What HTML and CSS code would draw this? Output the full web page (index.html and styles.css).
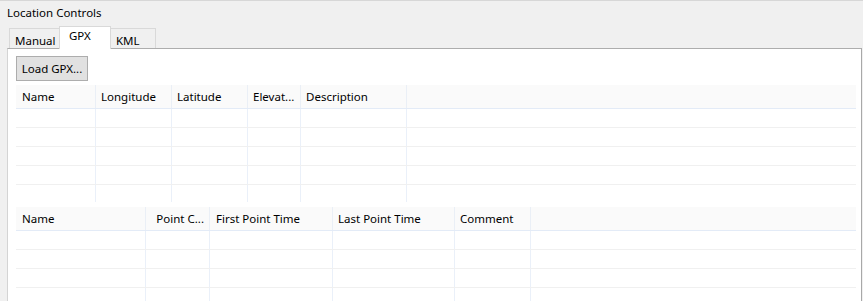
FILE: index.html
```html
<!DOCTYPE html>
<html>
<head>
<meta charset="utf-8">
<link rel="stylesheet" href="styles.css">
</head>
<body>
<div class="window">
  <div class="title">Location Controls</div>
  <div class="tabs">
    <div class="tab tab-manual">Manual</div>
    <div class="tab tab-gpx active">GPX</div>
    <div class="tab tab-kml">KML</div>
  </div>
  <div class="panel">
    <button class="btn">Load GPX...</button>
    <div class="grid grid-points">
      <div class="row head">
        <div class="cell first">Name</div>
        <div class="cell">Longitude</div>
        <div class="cell">Latitude</div>
        <div class="cell">Elevat...</div>
        <div class="cell">Description</div>
        <div class="cell fill"></div>
      </div>
      <div class="row"><div class="cell"></div><div class="cell"></div><div class="cell"></div><div class="cell"></div><div class="cell"></div><div class="cell fill"></div></div>
      <div class="row"><div class="cell"></div><div class="cell"></div><div class="cell"></div><div class="cell"></div><div class="cell"></div><div class="cell fill"></div></div>
      <div class="row"><div class="cell"></div><div class="cell"></div><div class="cell"></div><div class="cell"></div><div class="cell"></div><div class="cell fill"></div></div>
      <div class="row"><div class="cell"></div><div class="cell"></div><div class="cell"></div><div class="cell"></div><div class="cell"></div><div class="cell fill"></div></div>
      <div class="row"><div class="cell"></div><div class="cell"></div><div class="cell"></div><div class="cell"></div><div class="cell"></div><div class="cell fill"></div></div>
    </div>
    <div class="grid grid-tracks">
      <div class="row head">
        <div class="cell first">Name</div>
        <div class="cell right">Point C...</div>
        <div class="cell wide">First Point Time</div>
        <div class="cell">Last Point Time</div>
        <div class="cell">Comment</div>
        <div class="cell fill"></div>
      </div>
      <div class="row"><div class="cell"></div><div class="cell"></div><div class="cell"></div><div class="cell"></div><div class="cell"></div><div class="cell fill"></div></div>
      <div class="row"><div class="cell"></div><div class="cell"></div><div class="cell"></div><div class="cell"></div><div class="cell"></div><div class="cell fill"></div></div>
      <div class="row"><div class="cell"></div><div class="cell"></div><div class="cell"></div><div class="cell"></div><div class="cell"></div><div class="cell fill"></div></div>
      <div class="row"><div class="cell"></div><div class="cell"></div><div class="cell"></div><div class="cell"></div><div class="cell"></div><div class="cell fill"></div></div>
    </div>
  </div>
</div>
</body>
</html>
```
FILE: styles.css
```css
* { box-sizing: border-box; }
html, body {
  margin: 0;
  padding: 0;
  width: 863px;
  height: 301px;
  overflow: hidden;
  background: #f0f0f0;
  font-family: "Noto Sans", "Liberation Sans", Arial, sans-serif;
  font-size: 11.5px;
  color: #000;
}
.window {
  border-top: 1px solid #d7d7d7;
  height: 301px;
}
.title {
  padding: 4px 0 0 7px;
  line-height: 16px;
  height: 21px;
}
.tabs {
  display: flex;
  align-items: flex-end;
  height: 26px;
  padding-left: 9px;
  position: relative;
  z-index: 2;
}
.tab {
  height: 20px;
  border: 1px solid #d9d9d9;
  border-bottom: none;
  background: #f0f0f0;
  line-height: 14px;
  padding-top: 5px;
}
.tab-manual { width: 50px; padding-left: 5px; border-right: none; }
.tab-gpx { width: 52px; padding-left: 9px; }
.tab-kml { width: 45px; padding-left: 5px; border-left: none; }
.tab.active {
  height: 23px;
  margin-bottom: -1px;
  background: #fff;
  border-color: #d9d9d9;
  padding-top: 2px;
}
.panel {
  margin: 0 1px 0 7px;
  background: #fff;
  border: 1px solid #adadad;
  border-left-color: #d4d4d4;
  border-right-color: #a8a8a8;
  border-bottom: none;
  height: 253px;
  padding: 7px 5px 0 8px;
  overflow: hidden;
}
.btn {
  display: block;
  width: 72px;
  height: 25px;
  margin: 0;
  padding: 0;
  background: #e1e1e1;
  border: 1px solid #adadad;
  font-family: "Noto Sans", "Liberation Sans", Arial, sans-serif;
  font-size: 11.5px;
  color: #000;
}
.grid {
  overflow: hidden;
}
.grid-points {
  margin-top: 4px;
  height: 117px;
  margin-bottom: 5px;
}
.row {
  display: grid;
  height: 19px;
  border-bottom: 1px solid #f0f0f0;
}
.grid-points .row { grid-template-columns: 80px 76px 76px 53px 106px 1fr; }
.grid-tracks .row { grid-template-columns: 130px 64px 123px 122px 76px 1fr; }
.cell {
  border-right: 1px solid #eaf0f9;
  padding-left: 5px;
  white-space: nowrap;
  overflow: hidden;
}
.cell.fill { border-right: none; }
.row.head {
  height: 24px;
  background: #fafafa;
  border-bottom: 1px solid #e3ebf7;
  line-height: 23px;
}
.row.head .cell { border-right-color: #eaeff6; }
.row.head .cell.fill { border-right: none; }
.cell.first { padding-left: 6px; }
.cell.wide { padding-left: 6px; }
.cell.right { text-align: right; padding-right: 5px; padding-left: 0; }
```
